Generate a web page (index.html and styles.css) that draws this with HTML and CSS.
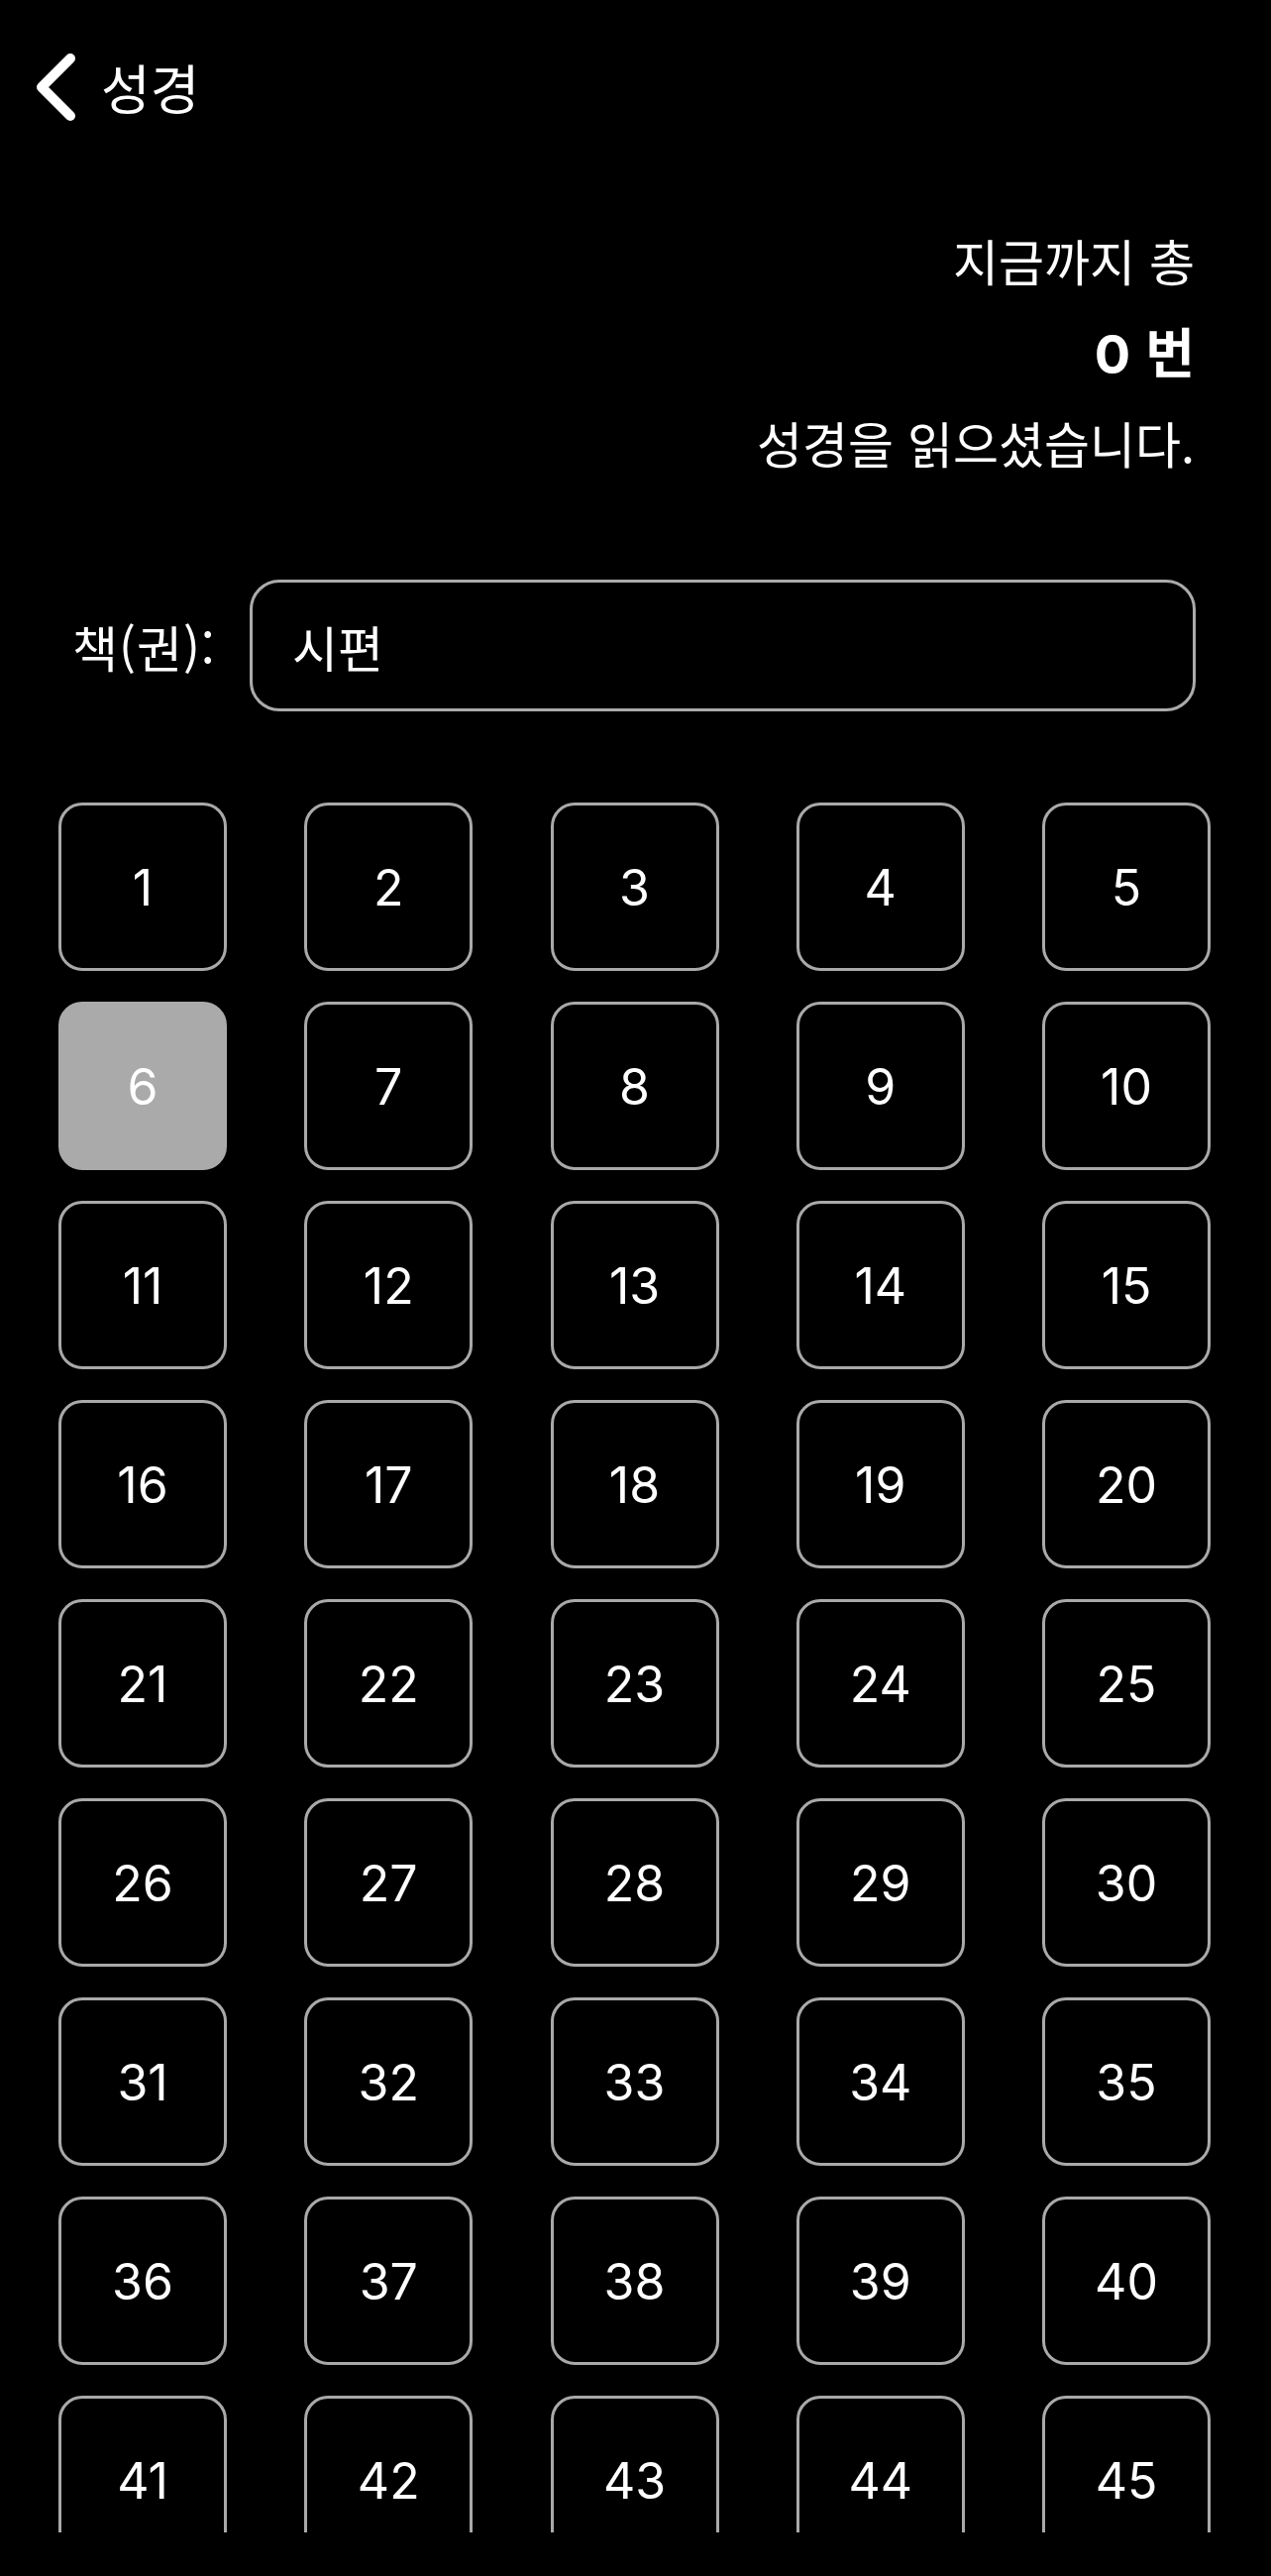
FILE: index.html
```html
<!DOCTYPE html>
<html lang="ko">
<head>
<meta charset="utf-8">
<title>성경</title>
<link rel="stylesheet" href="styles.css">
</head>
<body>
<div class="screen">
  <header class="topbar">
    <svg class="back" width="44" height="70" viewBox="0 0 44 70" aria-hidden="true">
      <path d="M37 6 L8 35 L37 64" fill="none" stroke="#fff" stroke-width="10" stroke-linecap="round" stroke-linejoin="round"/>
    </svg>
    <span class="title">성경</span>
  </header>

  <section class="summary">
    <div class="line">지금까지 총</div>
    <div class="line count"><span class="num">0</span> 번</div>
    <div class="line">성경을 읽으셨습니다.</div>
  </section>

  <section class="book-row">
    <label class="book-label">책(권):</label>
    <div class="book-input">시편</div>
  </section>

  <section class="grid-wrap">
    <div class="grid">
      <div class="cell">1</div><div class="cell">2</div><div class="cell">3</div><div class="cell">4</div><div class="cell">5</div>
      <div class="cell selected">6</div><div class="cell">7</div><div class="cell">8</div><div class="cell">9</div><div class="cell">10</div>
      <div class="cell">11</div><div class="cell">12</div><div class="cell">13</div><div class="cell">14</div><div class="cell">15</div>
      <div class="cell">16</div><div class="cell">17</div><div class="cell">18</div><div class="cell">19</div><div class="cell">20</div>
      <div class="cell">21</div><div class="cell">22</div><div class="cell">23</div><div class="cell">24</div><div class="cell">25</div>
      <div class="cell">26</div><div class="cell">27</div><div class="cell">28</div><div class="cell">29</div><div class="cell">30</div>
      <div class="cell">31</div><div class="cell">32</div><div class="cell">33</div><div class="cell">34</div><div class="cell">35</div>
      <div class="cell">36</div><div class="cell">37</div><div class="cell">38</div><div class="cell">39</div><div class="cell">40</div>
      <div class="cell">41</div><div class="cell">42</div><div class="cell">43</div><div class="cell">44</div><div class="cell">45</div>
    </div>
  </section>
</div>
</body>
</html>
```

FILE: styles.css
```css
html, body {
  margin: 0;
  padding: 0;
  background: #000;
}

body {
  color: #fff;
  font-family: "Noto Sans CJK KR", "Noto Sans", sans-serif;
}

.screen {
  width: 1283px;
  height: 2600px;
  overflow: hidden;
  background: #000;
}

.topbar {
  height: 176px;
  display: flex;
  align-items: center;
  padding-left: 34px;
  gap: 24px;
}

.back {
  display: block;
}

.title {
  font-size: 54px;
  line-height: 1;
  font-weight: 400;
}

.summary {
  margin-top: 40px;
  padding-right: 77px;
  text-align: right;
}

.line {
  font-size: 50px;
  line-height: 92px;
  height: 92px;
}

.count {
  font-size: 54px;
  font-weight: 700;
}

.count .num {
  font-family: Inter, "Noto Sans", sans-serif;
  font-weight: 700;
}

.book-row {
  margin-top: 93px;
  display: flex;
  align-items: center;
  padding-left: 73px;
}

.book-label {
  font-size: 50px;
  letter-spacing: 1px;
  width: 179px;
  flex: none;
}

.book-input {
  width: 955px;
  height: 133px;
  box-sizing: border-box;
  border: 3px solid #ababab;
  border-radius: 30px;
  display: flex;
  align-items: center;
  padding-left: 40px;
  font-size: 50px;
}

.grid-wrap {
  margin-top: 92px;
  height: 1746px;
  overflow: hidden;
  padding-left: 59px;
}

.grid {
  display: grid;
  grid-template-columns: repeat(5, 170px);
  grid-auto-rows: 170px;
  column-gap: 78.25px;
  row-gap: 31px;
}

.cell {
  box-sizing: border-box;
  border: 3px solid #a9a9a9;
  border-radius: 24px;
  display: flex;
  align-items: center;
  justify-content: center;
  font-family: Inter, "Noto Sans", sans-serif;
  font-size: 50px;
  font-weight: 400;
  color: #fff;
  padding-top: 2px;
}

.cell.selected {
  background: #aaaaaa;
  border-color: #aaaaaa;
}
```
